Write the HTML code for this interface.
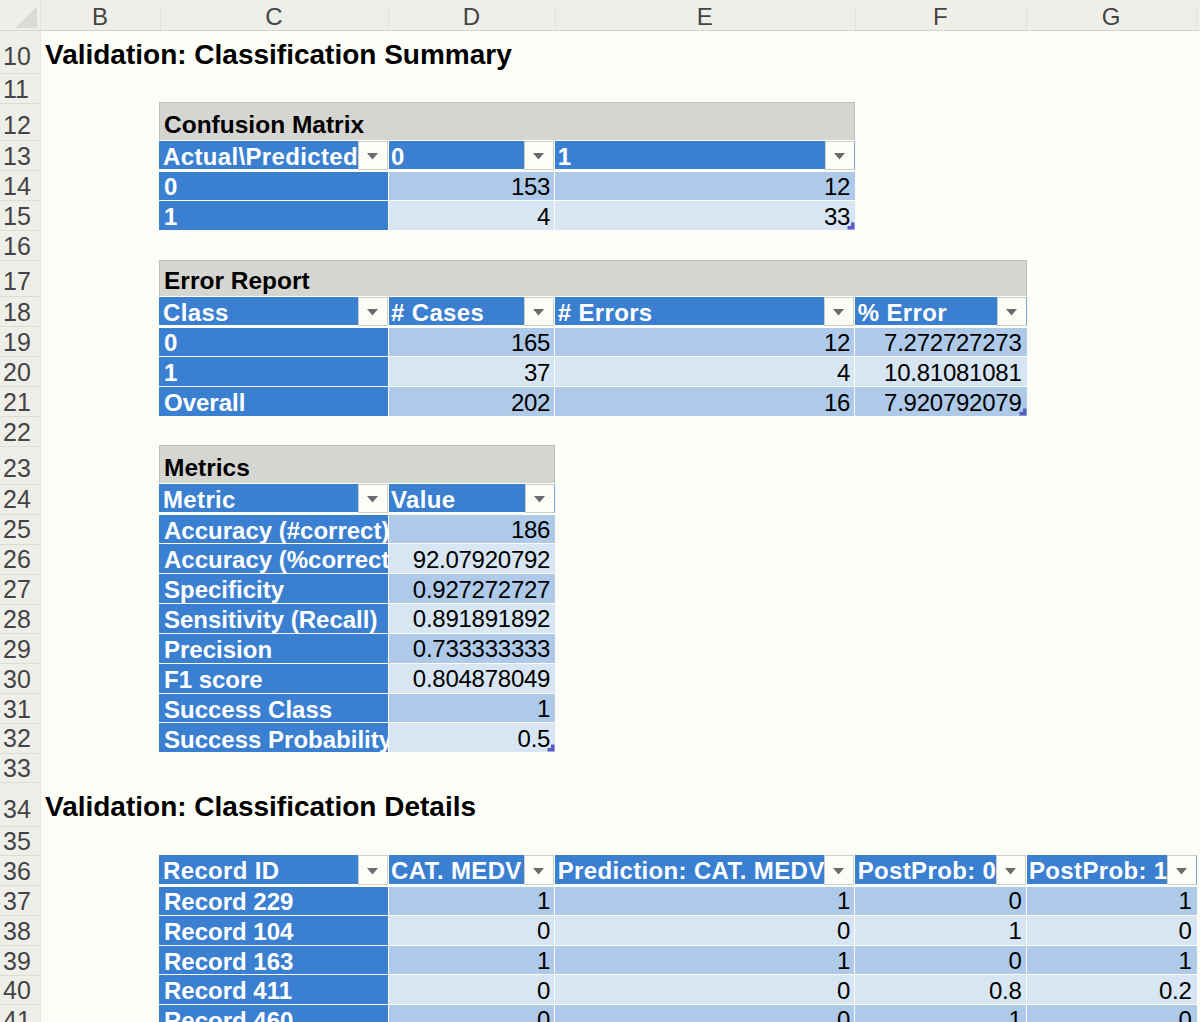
<!DOCTYPE html>
<html><head><meta charset="utf-8"><style>
html,body{margin:0;padding:0;background:#fdfdf7;}
#root{position:relative;width:1200px;height:1022px;overflow:hidden;background:#fdfdf7;}
#root div{position:absolute;}
.t{position:absolute;font-family:"Liberation Sans",sans-serif;white-space:pre;line-height:1;}
</style></head><body><div id="root">
<div style="left:0px;top:0px;width:1200px;height:30px;background:#efefea;"></div>
<div style="left:0px;top:30px;width:1200px;height:1px;background:#d6d6d1;"></div>
<div style="left:0px;top:31px;width:40px;height:991px;background:#efefea;"></div>
<div style="left:40px;top:31px;width:1px;height:991px;background:#e6e6e1;"></div>
<div style="left:40px;top:0px;width:1px;height:30px;background:#e2e2dd;"></div>
<svg style="position:absolute;left:0;top:0" width="40" height="30"><polygon points="37,6 37,28 15,28" fill="#dcdcd7"/></svg>
<div style="left:160px;top:8px;width:1px;height:22px;background:#e2e2dd;"></div>
<span class="t" style="left:40px;width:120px;text-align:center;top:4.68px;font-size:24px;color:#444">B</span>
<div style="left:388px;top:8px;width:1px;height:22px;background:#e2e2dd;"></div>
<span class="t" style="left:160px;width:228px;text-align:center;top:4.68px;font-size:24px;color:#444">C</span>
<div style="left:555px;top:8px;width:1px;height:22px;background:#e2e2dd;"></div>
<span class="t" style="left:388px;width:166.70000000000005px;text-align:center;top:4.68px;font-size:24px;color:#444">D</span>
<div style="left:855px;top:8px;width:1px;height:22px;background:#e2e2dd;"></div>
<span class="t" style="left:554.7px;width:300.0px;text-align:center;top:4.68px;font-size:24px;color:#444">E</span>
<div style="left:1026px;top:8px;width:1px;height:22px;background:#e2e2dd;"></div>
<span class="t" style="left:854.7px;width:171.29999999999995px;text-align:center;top:4.68px;font-size:24px;color:#444">F</span>
<div style="left:1196px;top:8px;width:1px;height:22px;background:#e2e2dd;"></div>
<span class="t" style="left:1026px;width:170px;text-align:center;top:4.68px;font-size:24px;color:#444">G</span>
<div style="left:0px;top:73px;width:40px;height:1px;background:#dcdcd7;"></div>
<span class="t" style="left:3.00px;top:44.01px;font-size:25px;font-weight:400;color:#444;">10</span>
<div style="left:0px;top:103px;width:40px;height:1px;background:#dcdcd7;"></div>
<span class="t" style="left:3.00px;top:76.74px;font-size:25px;font-weight:400;color:#444;">11</span>
<div style="left:0px;top:140px;width:40px;height:1px;background:#dcdcd7;"></div>
<span class="t" style="left:3.00px;top:112.66px;font-size:25px;font-weight:400;color:#444;">12</span>
<div style="left:0px;top:170px;width:40px;height:1px;background:#dcdcd7;"></div>
<span class="t" style="left:3.00px;top:144.24px;font-size:25px;font-weight:400;color:#444;">13</span>
<div style="left:0px;top:200px;width:40px;height:1px;background:#dcdcd7;"></div>
<span class="t" style="left:3.00px;top:174.24px;font-size:25px;font-weight:400;color:#444;">14</span>
<div style="left:0px;top:230px;width:40px;height:1px;background:#dcdcd7;"></div>
<span class="t" style="left:3.00px;top:204.24px;font-size:25px;font-weight:400;color:#444;">15</span>
<div style="left:0px;top:260px;width:40px;height:1px;background:#dcdcd7;"></div>
<span class="t" style="left:3.00px;top:234.24px;font-size:25px;font-weight:400;color:#444;">16</span>
<div style="left:0px;top:296px;width:40px;height:1px;background:#dcdcd7;"></div>
<span class="t" style="left:3.00px;top:268.98px;font-size:25px;font-weight:400;color:#444;">17</span>
<div style="left:0px;top:326px;width:40px;height:1px;background:#dcdcd7;"></div>
<span class="t" style="left:3.00px;top:300.24px;font-size:25px;font-weight:400;color:#444;">18</span>
<div style="left:0px;top:356px;width:40px;height:1px;background:#dcdcd7;"></div>
<span class="t" style="left:3.00px;top:330.24px;font-size:25px;font-weight:400;color:#444;">19</span>
<div style="left:0px;top:386px;width:40px;height:1px;background:#dcdcd7;"></div>
<span class="t" style="left:3.00px;top:360.24px;font-size:25px;font-weight:400;color:#444;">20</span>
<div style="left:0px;top:416px;width:40px;height:1px;background:#dcdcd7;"></div>
<span class="t" style="left:3.00px;top:390.24px;font-size:25px;font-weight:400;color:#444;">21</span>
<div style="left:0px;top:446px;width:40px;height:1px;background:#dcdcd7;"></div>
<span class="t" style="left:3.00px;top:419.84px;font-size:25px;font-weight:400;color:#444;">22</span>
<div style="left:0px;top:484px;width:40px;height:1px;background:#dcdcd7;"></div>
<span class="t" style="left:3.00px;top:455.66px;font-size:25px;font-weight:400;color:#444;">23</span>
<div style="left:0px;top:514px;width:40px;height:1px;background:#dcdcd7;"></div>
<span class="t" style="left:3.00px;top:487.40px;font-size:25px;font-weight:400;color:#444;">24</span>
<div style="left:0px;top:544px;width:40px;height:1px;background:#dcdcd7;"></div>
<span class="t" style="left:3.00px;top:517.44px;font-size:25px;font-weight:400;color:#444;">25</span>
<div style="left:0px;top:574px;width:40px;height:1px;background:#dcdcd7;"></div>
<span class="t" style="left:3.00px;top:547.28px;font-size:25px;font-weight:400;color:#444;">26</span>
<div style="left:0px;top:604px;width:40px;height:1px;background:#dcdcd7;"></div>
<span class="t" style="left:3.00px;top:577.24px;font-size:25px;font-weight:400;color:#444;">27</span>
<div style="left:0px;top:633px;width:40px;height:1px;background:#dcdcd7;"></div>
<span class="t" style="left:3.00px;top:607.08px;font-size:25px;font-weight:400;color:#444;">28</span>
<div style="left:0px;top:663px;width:40px;height:1px;background:#dcdcd7;"></div>
<span class="t" style="left:3.00px;top:636.96px;font-size:25px;font-weight:400;color:#444;">29</span>
<div style="left:0px;top:693px;width:40px;height:1px;background:#dcdcd7;"></div>
<span class="t" style="left:3.00px;top:666.78px;font-size:25px;font-weight:400;color:#444;">30</span>
<div style="left:0px;top:723px;width:40px;height:1px;background:#dcdcd7;"></div>
<span class="t" style="left:3.00px;top:696.66px;font-size:25px;font-weight:400;color:#444;">31</span>
<div style="left:0px;top:753px;width:40px;height:1px;background:#dcdcd7;"></div>
<span class="t" style="left:3.00px;top:726.48px;font-size:25px;font-weight:400;color:#444;">32</span>
<div style="left:0px;top:782px;width:40px;height:1px;background:#dcdcd7;"></div>
<span class="t" style="left:3.00px;top:756.28px;font-size:25px;font-weight:400;color:#444;">33</span>
<div style="left:0px;top:826px;width:40px;height:1px;background:#dcdcd7;"></div>
<span class="t" style="left:3.00px;top:796.51px;font-size:25px;font-weight:400;color:#444;">34</span>
<div style="left:0px;top:855px;width:40px;height:1px;background:#dcdcd7;"></div>
<span class="t" style="left:3.00px;top:828.84px;font-size:25px;font-weight:400;color:#444;">35</span>
<div style="left:0px;top:885px;width:40px;height:1px;background:#dcdcd7;"></div>
<span class="t" style="left:3.00px;top:858.90px;font-size:25px;font-weight:400;color:#444;">36</span>
<div style="left:0px;top:915px;width:40px;height:1px;background:#dcdcd7;"></div>
<span class="t" style="left:3.00px;top:888.78px;font-size:25px;font-weight:400;color:#444;">37</span>
<div style="left:0px;top:945px;width:40px;height:1px;background:#dcdcd7;"></div>
<span class="t" style="left:3.00px;top:918.74px;font-size:25px;font-weight:400;color:#444;">38</span>
<div style="left:0px;top:975px;width:40px;height:1px;background:#dcdcd7;"></div>
<span class="t" style="left:3.00px;top:948.50px;font-size:25px;font-weight:400;color:#444;">39</span>
<div style="left:0px;top:1004px;width:40px;height:1px;background:#dcdcd7;"></div>
<span class="t" style="left:3.00px;top:978.28px;font-size:25px;font-weight:400;color:#444;">40</span>
<div style="left:0px;top:1034px;width:40px;height:1px;background:#dcdcd7;"></div>
<span class="t" style="left:3.00px;top:1008.08px;font-size:25px;font-weight:400;color:#444;">41</span>
<span class="t" style="left:45.00px;top:40.80px;font-size:28px;font-weight:700;color:#000;">Validation: Classification Summary</span>
<div style="left:159px;top:102px;width:696px;height:38px;background:#d5d5d1;border-top:1px solid #bfbfba;border-left:1px solid #bfbfba;border-right:1px solid #bfbfba;box-sizing:border-box"></div>
<span class="t" style="left:164.00px;top:112.96px;font-size:24.5px;font-weight:700;color:#000;">Confusion Matrix</span>
<div style="left:159px;top:141px;width:229px;height:28px;background:#3a7fd0;overflow:hidden"><span class="t" style="left:4.00px;top:3.68px;font-size:24px;font-weight:700;color:#fff;letter-spacing:0.35px">Actual\Predicted</span></div>
<div style="left:358px;top:141px;width:30px;height:29px;background:#fdfdf7;border:1px solid #cfcfca;border-right-color:#cfcfca;box-sizing:border-box"></div>
<svg style="position:absolute;left:367px;top:153.0px" width="12" height="8"><polygon points="0,0 11,0 5.5,6.5" fill="#676b6b"/></svg>
<div style="left:389px;top:141px;width:165px;height:28px;background:#3a7fd0;overflow:hidden"><span class="t" style="left:2.00px;top:3.68px;font-size:24px;font-weight:700;color:#fff;letter-spacing:0.35px">0</span></div>
<div style="left:524px;top:141px;width:30px;height:29px;background:#fdfdf7;border:1px solid #cfcfca;border-right-color:#cfcfca;box-sizing:border-box"></div>
<svg style="position:absolute;left:533px;top:153.0px" width="12" height="8"><polygon points="0,0 11,0 5.5,6.5" fill="#676b6b"/></svg>
<div style="left:555px;top:141px;width:300px;height:28px;background:#3a7fd0;overflow:hidden"><span class="t" style="left:2.70px;top:3.68px;font-size:24px;font-weight:700;color:#fff;letter-spacing:0.35px">1</span></div>
<div style="left:825px;top:141px;width:30px;height:29px;background:#fdfdf7;border:1px solid #cfcfca;border-right-color:#7aa3d6;box-sizing:border-box"></div>
<svg style="position:absolute;left:834px;top:153.0px" width="12" height="8"><polygon points="0,0 11,0 5.5,6.5" fill="#676b6b"/></svg>
<div style="left:159px;top:172px;width:229px;height:28px;background:#3a7fd0;overflow:hidden"><span class="t" style="left:5.00px;top:3.38px;font-size:24px;font-weight:700;color:#fff;">0</span></div>
<div style="left:389px;top:172px;width:165px;height:28px;background:#aecae8;overflow:hidden"><span class="t" style="right:3.80px;top:2.68px;font-size:24px;font-weight:400;color:#000;letter-spacing:-0.25px">153</span></div>
<div style="left:555px;top:172px;width:300px;height:28px;background:#aecae8;overflow:hidden"><span class="t" style="right:4.80px;top:2.68px;font-size:24px;font-weight:400;color:#000;letter-spacing:-0.25px">12</span></div>
<div style="left:159px;top:201px;width:229px;height:29px;background:#3a7fd0;overflow:hidden"><span class="t" style="left:5.00px;top:4.38px;font-size:24px;font-weight:700;color:#fff;">1</span></div>
<div style="left:389px;top:201px;width:165px;height:29px;background:#d8e5f2;overflow:hidden"><span class="t" style="right:3.80px;top:3.68px;font-size:24px;font-weight:400;color:#000;letter-spacing:-0.25px">4</span></div>
<div style="left:555px;top:201px;width:300px;height:29px;background:#d8e5f2;overflow:hidden"><span class="t" style="right:4.80px;top:3.68px;font-size:24px;font-weight:400;color:#000;letter-spacing:-0.25px">33</span></div>
<svg style="position:absolute;left:847px;top:222px" width="8" height="8"><polygon points="7.5,0.5 7.5,7.5 0.5,7.5 0.5,4 4,4 4,0.5" fill="#5b5bc4"/></svg>
<div style="left:159px;top:260px;width:868px;height:36px;background:#d5d5d1;border-top:1px solid #bfbfba;border-left:1px solid #bfbfba;border-right:1px solid #bfbfba;box-sizing:border-box"></div>
<span class="t" style="left:164.00px;top:268.96px;font-size:24.5px;font-weight:700;color:#000;">Error Report</span>
<div style="left:159px;top:297px;width:229px;height:28px;background:#3a7fd0;overflow:hidden"><span class="t" style="left:4.00px;top:3.68px;font-size:24px;font-weight:700;color:#fff;letter-spacing:0.35px">Class</span></div>
<div style="left:358px;top:297px;width:30px;height:29px;background:#fdfdf7;border:1px solid #cfcfca;border-right-color:#cfcfca;box-sizing:border-box"></div>
<svg style="position:absolute;left:367px;top:309.0px" width="12" height="8"><polygon points="0,0 11,0 5.5,6.5" fill="#676b6b"/></svg>
<div style="left:389px;top:297px;width:165px;height:28px;background:#3a7fd0;overflow:hidden"><span class="t" style="left:2.00px;top:3.68px;font-size:24px;font-weight:700;color:#fff;letter-spacing:0.35px"># Cases</span></div>
<div style="left:524px;top:297px;width:30px;height:29px;background:#fdfdf7;border:1px solid #cfcfca;border-right-color:#cfcfca;box-sizing:border-box"></div>
<svg style="position:absolute;left:533px;top:309.0px" width="12" height="8"><polygon points="0,0 11,0 5.5,6.5" fill="#676b6b"/></svg>
<div style="left:555px;top:297px;width:299px;height:28px;background:#3a7fd0;overflow:hidden"><span class="t" style="left:2.70px;top:3.68px;font-size:24px;font-weight:700;color:#fff;letter-spacing:0.35px"># Errors</span></div>
<div style="left:824px;top:297px;width:30px;height:29px;background:#fdfdf7;border:1px solid #cfcfca;border-right-color:#cfcfca;box-sizing:border-box"></div>
<svg style="position:absolute;left:833px;top:309.0px" width="12" height="8"><polygon points="0,0 11,0 5.5,6.5" fill="#676b6b"/></svg>
<div style="left:855px;top:297px;width:172px;height:28px;background:#3a7fd0;overflow:hidden"><span class="t" style="left:2.70px;top:3.68px;font-size:24px;font-weight:700;color:#fff;letter-spacing:0.35px">% Error</span></div>
<div style="left:997px;top:297px;width:30px;height:29px;background:#fdfdf7;border:1px solid #cfcfca;border-right-color:#7aa3d6;box-sizing:border-box"></div>
<svg style="position:absolute;left:1006px;top:309.0px" width="12" height="8"><polygon points="0,0 11,0 5.5,6.5" fill="#676b6b"/></svg>
<div style="left:159px;top:328px;width:229px;height:28px;background:#3a7fd0;overflow:hidden"><span class="t" style="left:5.00px;top:3.38px;font-size:24px;font-weight:700;color:#fff;">0</span></div>
<div style="left:389px;top:328px;width:165px;height:28px;background:#aecae8;overflow:hidden"><span class="t" style="right:3.80px;top:2.68px;font-size:24px;font-weight:400;color:#000;letter-spacing:-0.25px">165</span></div>
<div style="left:555px;top:328px;width:299px;height:28px;background:#aecae8;overflow:hidden"><span class="t" style="right:3.80px;top:2.68px;font-size:24px;font-weight:400;color:#000;letter-spacing:-0.25px">12</span></div>
<div style="left:855px;top:328px;width:172px;height:28px;background:#aecae8;overflow:hidden"><span class="t" style="right:5.50px;top:2.68px;font-size:24px;font-weight:400;color:#000;letter-spacing:-0.25px">7.272727273</span></div>
<div style="left:159px;top:357px;width:229px;height:29px;background:#3a7fd0;overflow:hidden"><span class="t" style="left:5.00px;top:4.38px;font-size:24px;font-weight:700;color:#fff;">1</span></div>
<div style="left:389px;top:357px;width:165px;height:29px;background:#d8e5f2;overflow:hidden"><span class="t" style="right:3.80px;top:3.68px;font-size:24px;font-weight:400;color:#000;letter-spacing:-0.25px">37</span></div>
<div style="left:555px;top:357px;width:299px;height:29px;background:#d8e5f2;overflow:hidden"><span class="t" style="right:3.80px;top:3.68px;font-size:24px;font-weight:400;color:#000;letter-spacing:-0.25px">4</span></div>
<div style="left:855px;top:357px;width:172px;height:29px;background:#d8e5f2;overflow:hidden"><span class="t" style="right:5.50px;top:3.68px;font-size:24px;font-weight:400;color:#000;letter-spacing:-0.25px">10.81081081</span></div>
<div style="left:159px;top:387px;width:229px;height:29px;background:#3a7fd0;overflow:hidden"><span class="t" style="left:5.00px;top:4.38px;font-size:24px;font-weight:700;color:#fff;">Overall</span></div>
<div style="left:389px;top:387px;width:165px;height:29px;background:#aecae8;overflow:hidden"><span class="t" style="right:3.80px;top:3.68px;font-size:24px;font-weight:400;color:#000;letter-spacing:-0.25px">202</span></div>
<div style="left:555px;top:387px;width:299px;height:29px;background:#aecae8;overflow:hidden"><span class="t" style="right:3.80px;top:3.68px;font-size:24px;font-weight:400;color:#000;letter-spacing:-0.25px">16</span></div>
<div style="left:855px;top:387px;width:172px;height:29px;background:#aecae8;overflow:hidden"><span class="t" style="right:5.50px;top:3.68px;font-size:24px;font-weight:400;color:#000;letter-spacing:-0.25px">7.920792079</span></div>
<svg style="position:absolute;left:1019px;top:408px" width="8" height="8"><polygon points="7.5,0.5 7.5,7.5 0.5,7.5 0.5,4 4,4 4,0.5" fill="#5b5bc4"/></svg>
<div style="left:159px;top:445px;width:396px;height:38px;background:#d5d5d1;border-top:1px solid #bfbfba;border-left:1px solid #bfbfba;border-right:1px solid #bfbfba;box-sizing:border-box"></div>
<span class="t" style="left:164.00px;top:455.96px;font-size:24.5px;font-weight:700;color:#000;">Metrics</span>
<div style="left:159px;top:484px;width:229px;height:28px;background:#3a7fd0;overflow:hidden"><span class="t" style="left:4.00px;top:3.88px;font-size:24px;font-weight:700;color:#fff;letter-spacing:0.35px">Metric</span></div>
<div style="left:358px;top:484px;width:30px;height:29px;background:#fdfdf7;border:1px solid #cfcfca;border-right-color:#cfcfca;box-sizing:border-box"></div>
<svg style="position:absolute;left:367px;top:496.0px" width="12" height="8"><polygon points="0,0 11,0 5.5,6.5" fill="#676b6b"/></svg>
<div style="left:389px;top:484px;width:166px;height:28px;background:#3a7fd0;overflow:hidden"><span class="t" style="left:2.00px;top:3.88px;font-size:24px;font-weight:700;color:#fff;letter-spacing:0.35px">Value</span></div>
<div style="left:525px;top:484px;width:30px;height:29px;background:#fdfdf7;border:1px solid #cfcfca;border-right-color:#7aa3d6;box-sizing:border-box"></div>
<svg style="position:absolute;left:534px;top:496.0px" width="12" height="8"><polygon points="0,0 11,0 5.5,6.5" fill="#676b6b"/></svg>
<div style="left:159px;top:515px;width:229px;height:28px;background:#3a7fd0;overflow:hidden"><span class="t" style="left:5.00px;top:3.58px;font-size:24px;font-weight:700;color:#fff;">Accuracy (#correct)</span></div>
<div style="left:389px;top:515px;width:166px;height:28px;background:#aecae8;overflow:hidden"><span class="t" style="right:4.80px;top:2.88px;font-size:24px;font-weight:400;color:#000;letter-spacing:-0.25px">186</span></div>
<div style="left:159px;top:544px;width:229px;height:29px;background:#3a7fd0;overflow:hidden"><span class="t" style="left:5.00px;top:4.38px;font-size:24px;font-weight:700;color:#fff;">Accuracy (%correct)</span></div>
<div style="left:389px;top:544px;width:166px;height:29px;background:#d8e5f2;overflow:hidden"><span class="t" style="right:4.80px;top:3.68px;font-size:24px;font-weight:400;color:#000;letter-spacing:-0.25px">92.07920792</span></div>
<div style="left:159px;top:574px;width:229px;height:29px;background:#3a7fd0;overflow:hidden"><span class="t" style="left:5.00px;top:4.38px;font-size:24px;font-weight:700;color:#fff;">Specificity</span></div>
<div style="left:389px;top:574px;width:166px;height:29px;background:#aecae8;overflow:hidden"><span class="t" style="right:4.80px;top:3.68px;font-size:24px;font-weight:400;color:#000;letter-spacing:-0.25px">0.927272727</span></div>
<div style="left:159px;top:604px;width:229px;height:29px;background:#3a7fd0;overflow:hidden"><span class="t" style="left:5.00px;top:4.18px;font-size:24px;font-weight:700;color:#fff;">Sensitivity (Recall)</span></div>
<div style="left:389px;top:604px;width:166px;height:29px;background:#d8e5f2;overflow:hidden"><span class="t" style="right:4.80px;top:3.48px;font-size:24px;font-weight:400;color:#000;letter-spacing:-0.25px">0.891891892</span></div>
<div style="left:159px;top:634px;width:229px;height:29px;background:#3a7fd0;overflow:hidden"><span class="t" style="left:5.00px;top:4.08px;font-size:24px;font-weight:700;color:#fff;">Precision</span></div>
<div style="left:389px;top:634px;width:166px;height:29px;background:#aecae8;overflow:hidden"><span class="t" style="right:4.80px;top:3.38px;font-size:24px;font-weight:400;color:#000;letter-spacing:-0.25px">0.733333333</span></div>
<div style="left:159px;top:664px;width:229px;height:29px;background:#3a7fd0;overflow:hidden"><span class="t" style="left:5.00px;top:3.88px;font-size:24px;font-weight:700;color:#fff;">F1 score</span></div>
<div style="left:389px;top:664px;width:166px;height:29px;background:#d8e5f2;overflow:hidden"><span class="t" style="right:4.80px;top:3.18px;font-size:24px;font-weight:400;color:#000;letter-spacing:-0.25px">0.804878049</span></div>
<div style="left:159px;top:694px;width:229px;height:28px;background:#3a7fd0;overflow:hidden"><span class="t" style="left:5.00px;top:3.78px;font-size:24px;font-weight:700;color:#fff;">Success Class</span></div>
<div style="left:389px;top:694px;width:166px;height:28px;background:#aecae8;overflow:hidden"><span class="t" style="right:4.80px;top:3.08px;font-size:24px;font-weight:400;color:#000;letter-spacing:-0.25px">1</span></div>
<div style="left:159px;top:723px;width:229px;height:29px;background:#3a7fd0;overflow:hidden"><span class="t" style="left:5.00px;top:4.58px;font-size:24px;font-weight:700;color:#fff;">Success Probability</span></div>
<div style="left:389px;top:723px;width:166px;height:29px;background:#d8e5f2;overflow:hidden"><span class="t" style="right:4.80px;top:3.88px;font-size:24px;font-weight:400;color:#000;letter-spacing:-0.25px">0.5</span></div>
<svg style="position:absolute;left:547px;top:744px" width="8" height="8"><polygon points="7.5,0.5 7.5,7.5 0.5,7.5 0.5,4 4,4 4,0.5" fill="#5b5bc4"/></svg>
<span class="t" style="left:45.00px;top:792.80px;font-size:28px;font-weight:700;color:#000;">Validation: Classification Details</span>
<div style="left:159px;top:855px;width:229px;height:29px;background:#3a7fd0;overflow:hidden"><span class="t" style="left:4.00px;top:4.38px;font-size:24px;font-weight:700;color:#fff;letter-spacing:0.35px">Record ID</span></div>
<div style="left:358px;top:855px;width:30px;height:30px;background:#fdfdf7;border:1px solid #cfcfca;border-right-color:#cfcfca;box-sizing:border-box"></div>
<svg style="position:absolute;left:367px;top:867.5px" width="12" height="8"><polygon points="0,0 11,0 5.5,6.5" fill="#676b6b"/></svg>
<div style="left:389px;top:855px;width:165px;height:29px;background:#3a7fd0;overflow:hidden"><span class="t" style="left:2.00px;top:4.38px;font-size:24px;font-weight:700;color:#fff;letter-spacing:0.35px">CAT. MEDV</span></div>
<div style="left:524px;top:855px;width:30px;height:30px;background:#fdfdf7;border:1px solid #cfcfca;border-right-color:#cfcfca;box-sizing:border-box"></div>
<svg style="position:absolute;left:533px;top:867.5px" width="12" height="8"><polygon points="0,0 11,0 5.5,6.5" fill="#676b6b"/></svg>
<div style="left:555px;top:855px;width:299px;height:29px;background:#3a7fd0;overflow:hidden"><span class="t" style="left:2.70px;top:4.38px;font-size:24px;font-weight:700;color:#fff;letter-spacing:0.35px">Prediction: CAT. MEDV</span></div>
<div style="left:824px;top:855px;width:30px;height:30px;background:#fdfdf7;border:1px solid #cfcfca;border-right-color:#cfcfca;box-sizing:border-box"></div>
<svg style="position:absolute;left:833px;top:867.5px" width="12" height="8"><polygon points="0,0 11,0 5.5,6.5" fill="#676b6b"/></svg>
<div style="left:855px;top:855px;width:171px;height:29px;background:#3a7fd0;overflow:hidden"><span class="t" style="left:2.70px;top:4.38px;font-size:24px;font-weight:700;color:#fff;letter-spacing:0.35px">PostProb: 0</span></div>
<div style="left:996px;top:855px;width:30px;height:30px;background:#fdfdf7;border:1px solid #cfcfca;border-right-color:#cfcfca;box-sizing:border-box"></div>
<svg style="position:absolute;left:1005px;top:867.5px" width="12" height="8"><polygon points="0,0 11,0 5.5,6.5" fill="#676b6b"/></svg>
<div style="left:1027px;top:855px;width:170px;height:29px;background:#3a7fd0;overflow:hidden"><span class="t" style="left:2.00px;top:4.38px;font-size:24px;font-weight:700;color:#fff;letter-spacing:0.35px">PostProb: 1</span></div>
<div style="left:1167px;top:855px;width:30px;height:30px;background:#fdfdf7;border:1px solid #cfcfca;border-right-color:#7aa3d6;box-sizing:border-box"></div>
<svg style="position:absolute;left:1176px;top:867.5px" width="12" height="8"><polygon points="0,0 11,0 5.5,6.5" fill="#676b6b"/></svg>
<div style="left:159px;top:887px;width:229px;height:28px;background:#3a7fd0;overflow:hidden"><span class="t" style="left:5.00px;top:2.88px;font-size:24px;font-weight:700;color:#fff;">Record 229</span></div>
<div style="left:389px;top:887px;width:165px;height:28px;background:#aecae8;overflow:hidden"><span class="t" style="right:3.80px;top:2.18px;font-size:24px;font-weight:400;color:#000;letter-spacing:-0.25px">1</span></div>
<div style="left:555px;top:887px;width:299px;height:28px;background:#aecae8;overflow:hidden"><span class="t" style="right:3.80px;top:2.18px;font-size:24px;font-weight:400;color:#000;letter-spacing:-0.25px">1</span></div>
<div style="left:855px;top:887px;width:171px;height:28px;background:#aecae8;overflow:hidden"><span class="t" style="right:4.50px;top:2.18px;font-size:24px;font-weight:400;color:#000;letter-spacing:-0.25px">0</span></div>
<div style="left:1027px;top:887px;width:170px;height:28px;background:#aecae8;overflow:hidden"><span class="t" style="right:5.50px;top:2.18px;font-size:24px;font-weight:400;color:#000;letter-spacing:-0.25px">1</span></div>
<div style="left:159px;top:916px;width:229px;height:29px;background:#3a7fd0;overflow:hidden"><span class="t" style="left:5.00px;top:3.88px;font-size:24px;font-weight:700;color:#fff;">Record 104</span></div>
<div style="left:389px;top:916px;width:165px;height:29px;background:#d8e5f2;overflow:hidden"><span class="t" style="right:3.80px;top:3.18px;font-size:24px;font-weight:400;color:#000;letter-spacing:-0.25px">0</span></div>
<div style="left:555px;top:916px;width:299px;height:29px;background:#d8e5f2;overflow:hidden"><span class="t" style="right:3.80px;top:3.18px;font-size:24px;font-weight:400;color:#000;letter-spacing:-0.25px">0</span></div>
<div style="left:855px;top:916px;width:171px;height:29px;background:#d8e5f2;overflow:hidden"><span class="t" style="right:4.50px;top:3.18px;font-size:24px;font-weight:400;color:#000;letter-spacing:-0.25px">1</span></div>
<div style="left:1027px;top:916px;width:170px;height:29px;background:#d8e5f2;overflow:hidden"><span class="t" style="right:5.50px;top:3.18px;font-size:24px;font-weight:400;color:#000;letter-spacing:-0.25px">0</span></div>
<div style="left:159px;top:946px;width:229px;height:28px;background:#3a7fd0;overflow:hidden"><span class="t" style="left:5.00px;top:3.58px;font-size:24px;font-weight:700;color:#fff;">Record 163</span></div>
<div style="left:389px;top:946px;width:165px;height:28px;background:#aecae8;overflow:hidden"><span class="t" style="right:3.80px;top:2.88px;font-size:24px;font-weight:400;color:#000;letter-spacing:-0.25px">1</span></div>
<div style="left:555px;top:946px;width:299px;height:28px;background:#aecae8;overflow:hidden"><span class="t" style="right:3.80px;top:2.88px;font-size:24px;font-weight:400;color:#000;letter-spacing:-0.25px">1</span></div>
<div style="left:855px;top:946px;width:171px;height:28px;background:#aecae8;overflow:hidden"><span class="t" style="right:4.50px;top:2.88px;font-size:24px;font-weight:400;color:#000;letter-spacing:-0.25px">0</span></div>
<div style="left:1027px;top:946px;width:170px;height:28px;background:#aecae8;overflow:hidden"><span class="t" style="right:5.50px;top:2.88px;font-size:24px;font-weight:400;color:#000;letter-spacing:-0.25px">1</span></div>
<div style="left:159px;top:975px;width:229px;height:29px;background:#3a7fd0;overflow:hidden"><span class="t" style="left:5.00px;top:4.38px;font-size:24px;font-weight:700;color:#fff;">Record 411</span></div>
<div style="left:389px;top:975px;width:165px;height:29px;background:#d8e5f2;overflow:hidden"><span class="t" style="right:3.80px;top:3.68px;font-size:24px;font-weight:400;color:#000;letter-spacing:-0.25px">0</span></div>
<div style="left:555px;top:975px;width:299px;height:29px;background:#d8e5f2;overflow:hidden"><span class="t" style="right:3.80px;top:3.68px;font-size:24px;font-weight:400;color:#000;letter-spacing:-0.25px">0</span></div>
<div style="left:855px;top:975px;width:171px;height:29px;background:#d8e5f2;overflow:hidden"><span class="t" style="right:4.50px;top:3.68px;font-size:24px;font-weight:400;color:#000;letter-spacing:-0.25px">0.8</span></div>
<div style="left:1027px;top:975px;width:170px;height:29px;background:#d8e5f2;overflow:hidden"><span class="t" style="right:5.50px;top:3.68px;font-size:24px;font-weight:400;color:#000;letter-spacing:-0.25px">0.2</span></div>
<div style="left:159px;top:1005px;width:229px;height:29px;background:#3a7fd0;overflow:hidden"><span class="t" style="left:5.00px;top:4.18px;font-size:24px;font-weight:700;color:#fff;">Record 460</span></div>
<div style="left:389px;top:1005px;width:165px;height:29px;background:#aecae8;overflow:hidden"><span class="t" style="right:3.80px;top:3.48px;font-size:24px;font-weight:400;color:#000;letter-spacing:-0.25px">0</span></div>
<div style="left:555px;top:1005px;width:299px;height:29px;background:#aecae8;overflow:hidden"><span class="t" style="right:3.80px;top:3.48px;font-size:24px;font-weight:400;color:#000;letter-spacing:-0.25px">0</span></div>
<div style="left:855px;top:1005px;width:171px;height:29px;background:#aecae8;overflow:hidden"><span class="t" style="right:4.50px;top:3.48px;font-size:24px;font-weight:400;color:#000;letter-spacing:-0.25px">1</span></div>
<div style="left:1027px;top:1005px;width:170px;height:29px;background:#aecae8;overflow:hidden"><span class="t" style="right:5.50px;top:3.48px;font-size:24px;font-weight:400;color:#000;letter-spacing:-0.25px">0</span></div>
</div></body></html>
